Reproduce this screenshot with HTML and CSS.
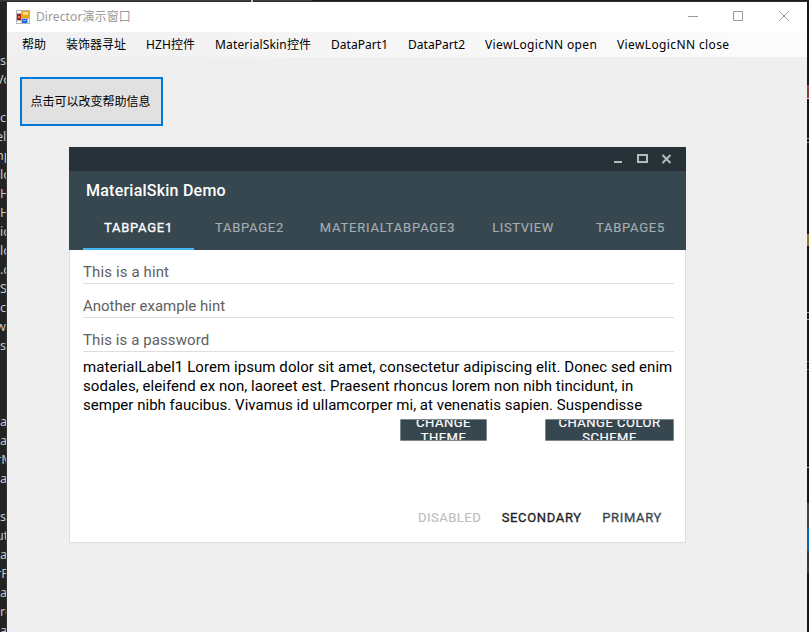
FILE: index.html
```html
<!DOCTYPE html>
<html lang="zh-CN">
<head>
<meta charset="utf-8">
<title>Director演示窗口</title>
<link rel="stylesheet" href="styles.css">
</head>
<body>
<div class="top-edge"><i></i></div>
<div class="desktop">
  <pre class="code-edge">


s
<b>Vo</b>

c
<b>ell</b>
<b>np</b>
lo
H
H
ic
lo
.c
S
cs
<b>we</b>
s



an
an
<b>rM</b>
a

s
<b>ut</b>
an
<b>rP</b>
a
re
an</pre>
  <main class="window">
    <header class="titlebar">
      <svg class="app-icon" width="14" height="14" viewBox="0 0 14 14" shape-rendering="crispEdges">
        <path fill="#b4b4b4" d="M0 0h14v14H0z"/><path fill="#fff" d="M1 1h4v2H1zM1 11h4v2H1zM12 9h1v4h-1z"/>
        <path fill="#e8a413" d="M6 1h7v7H6z"/><path fill="#ffe287" d="M7 2h5v3H7z"/>
        <path fill="#a91e18" d="M1 4h4v6H1z"/><path fill="#ef7660" d="M2 6h2v2H2z"/>
        <path fill="#2868d8" d="M6 9h5v4H6z"/><path fill="#79b5ff" d="M7 10h3v1H7z"/>
      </svg>
      <h1 class="title">Director演示窗口</h1>
      <svg class="controls" width="102" height="12" viewBox="0 0 102 12" fill="none" stroke="#999">
        <path d="M0 6.5h10M45.5 1.5h9v9h-9z"/><path d="M91 1l10 10M101 1L91 11"/>
      </svg>
    </header>
    <nav class="menu">
      <span class="m1">帮助</span><span class="m2">装饰器寻址</span><span class="m3">HZH控件</span><span class="m4">MaterialSkin控件</span><span class="m5">DataPart1</span><span class="m5">DataPart2</span><span class="m6">ViewLogicNN open</span><span class="m6">ViewLogicNN close</span>
    </nav>
    <button class="help">点击可以改变帮助信息</button>
    <section class="demo">
      <div class="demo-bar">
        <svg width="58" height="10" viewBox="0 0 58 10" fill="none" stroke="#b5babd" stroke-width="2">
          <path d="M0 8h8M24 1h9v7h-9z"/><path d="M48.5 1l8 8M56.5 1l-8 8"/>
        </svg>
      </div>
      <div class="demo-head">
        <h2>MaterialSkin Demo</h2>
        <div class="tabs">
          <span class="tab active">TABPAGE1</span><span class="tab">TABPAGE2</span><span class="tab tab-long">MATERIALTABPAGE3</span><span class="tab tab-list">LISTVIEW</span><span class="tab tab-last">TABPAGE5</span>
        </div>
      </div>
      <div class="demo-body">
        <div class="field f1">This is a hint</div>
        <div class="field">Another example hint</div>
        <div class="field f3">This is a password</div>
        <p class="copy"><span class="l1">materialLabel1 Lorem ipsum dolor sit amet, consectetur adipiscing elit. Donec sed enim</span><span class="l2">sodales, eleifend ex non, laoreet est. Praesent rhoncus lorem non nibh tincidunt, in</span><span class="l3">semper nibh faucibus. Vivamus id ullamcorper mi, at venenatis sapien. Suspendisse</span></p>
        <div class="raised">
          <div class="btn theme"><span>CHANGE<br>THEME</span></div>
          <div class="btn scheme"><span>CHANGE COLOR<br>SCHEME</span></div>
        </div>
        <div class="flat"><span class="disabled">DISABLED</span><span class="secondary">SECONDARY</span><span class="primary">PRIMARY</span></div>
      </div>
    </section>
  </main>
  <div class="right-edge"></div>
</div>
</body>
</html>
```
FILE: styles.css
```css
* { box-sizing: border-box; }
body { margin: 0; height: 632px; overflow: hidden; background: #1e1e1e; font-family: "Noto Sans", "Noto Sans CJK SC", sans-serif; }
.top-edge { height: 2px; background: linear-gradient(90deg, #3a3a40 0 312px, #1c1a1d 312px); border-bottom: 1px solid #302e31; display: flex; }
.top-edge i { width: 2px; height: 2px; margin-left: 251px; background: #bbb; }
.desktop { display: grid; grid-template-columns: 7px 800px 2px; height: 630px; }
.code-edge { margin: 0; padding-top: 11px; width: 7px; height: 630px; overflow: hidden; background: #232323; border-right: 1px solid #353535; color: #c8c8c8; font: 12.5px/19px "Noto Sans", sans-serif; }
.code-edge b { font-weight: 400; margin-left: -4px; }
.right-edge { background: linear-gradient(#171717 0 83px, #8b3c3c 83px 96px, #ccc 96px 97px, #171717 97px 136px, #888 136px 137px, #171717 137px 140px, #888 140px 141px, #171717 141px 232px, #966e30 232px 244px, #171717 244px 310px, #a5a5b5 310px 311px, #171717 311px 317px, #aaa 317px 318px, #171717 318px 359px, #3c773c 359px 360px, #171717 360px 367px, #3c773c 367px 368px, #171717 368px 465px, #aaa 465px 466px, #171717 466px 501px, #444 501px 526px, #0d67aa 526px 549px, #383838 549px 571px, #171717 571px); }
.window { background: #efefef; display: flex; flex-direction: column; align-items: flex-start; }
.titlebar { width: 100%; height: 30px; padding: 0 17px 0 9px; display: flex; align-items: center; background: #fff; }
.title { margin: 0 auto 0 6px; font-size: 12px; font-weight: 400; color: #999; line-height: 30px; letter-spacing: .1px; }
.controls { margin-top: -2px; }
.menu { width: 100%; height: 25px; padding-left: 15px; display: flex; background: linear-gradient(90deg, #f0f0f0, #fcfcfc); font-size: 12px; line-height: 26px; color: #000; white-space: nowrap; }
.m1 { width: 44px; }
.m2 { width: 80px; }
.m3 { width: 69px; letter-spacing: .1px; }
.m4 { width: 116px; letter-spacing: .15px; }
.m5 { width: 77px; letter-spacing: .05px; }
.m6 { width: 132px; letter-spacing: .38px; }
.help { margin: 20px 0 0 13px; width: 143px; height: 49px; padding: 0 2px 2px 0; border: 2px solid #0078d7; background: #e1e1e1; color: #000; font: 12px "Noto Sans CJK SC", sans-serif; }
.demo { margin: 21px 0 0 62px; width: 617px; height: 396px; font-family: Roboto, sans-serif; background: #fff; display: flex; flex-direction: column; }
.demo-bar { height: 24px; padding: 7px 14px 0 0; background: #273238; display: flex; justify-content: flex-end; }
.demo-head { height: 79px; background: #37474f; display: flex; flex-direction: column; justify-content: space-between; }
.demo-head h2 { margin: 10px 0 0 17px; font-size: 16px; line-height: 20px; font-weight: 500; color: #fff; letter-spacing: .23px; }
.tabs { display: flex; padding-left: 14px; font-size: 13px; letter-spacing: .75px; }
.tab { width: 111px; height: 45px; line-height: 45px; text-align: center; color: #a5adb1; -webkit-text-stroke: .15px; }
.tab.active { color: #fff; letter-spacing: .75px; border-bottom: 2px solid #40b8f8; -webkit-text-stroke: .3px; }
.tab-long { width: 165px; letter-spacing: .8px; }
.tab-list { width: 105px; padding-left: 1px; letter-spacing: .6px; }
.tab-last { width: 111px; }
.demo-body { flex: 1; padding: 0 11px 0 13px; border: 1px solid #dedede; border-top: 0; }
.field { height: 34px; padding-top: 13px; border-bottom: 1px solid #dedede; font-size: 15px; line-height: 18px; color: #606060; }
.f1 { letter-spacing: .12px; }
.f3 { letter-spacing: .09px; }
.copy { margin: 6px 0 4px; font-size: 15px; line-height: 19px; color: #000; white-space: nowrap; }
.copy span { display: block; }
.l1 { letter-spacing: .069px; }
.l2 { letter-spacing: .06px; }
.l3 { letter-spacing: .02px; }
.raised { display: flex; justify-content: flex-end; gap: 58px; }
.btn { height: 22px; overflow: hidden; display: flex; align-items: center; justify-content: center; padding-bottom: 1px; text-align: center; background: #37474f; border: 1px solid #7b878c; border-radius: 1px; color: #fff; font-size: 13px; line-height: 15px; letter-spacing: .5px; -webkit-text-stroke: .2px; }
.theme { width: 87px; }
.scheme { width: 129px; }
.flat { margin-top: 68px; padding-right: 12px; display: flex; justify-content: flex-end; gap: 20.5px; font-size: 13px; line-height: 18px; letter-spacing: .5px; }
.disabled { color: #bdbdbd; -webkit-text-stroke: .15px; }
.secondary { color: #212121; -webkit-text-stroke: .3px; letter-spacing: .65px; }
.primary { color: #37474f; -webkit-text-stroke: .3px; letter-spacing: .65px; }
```
